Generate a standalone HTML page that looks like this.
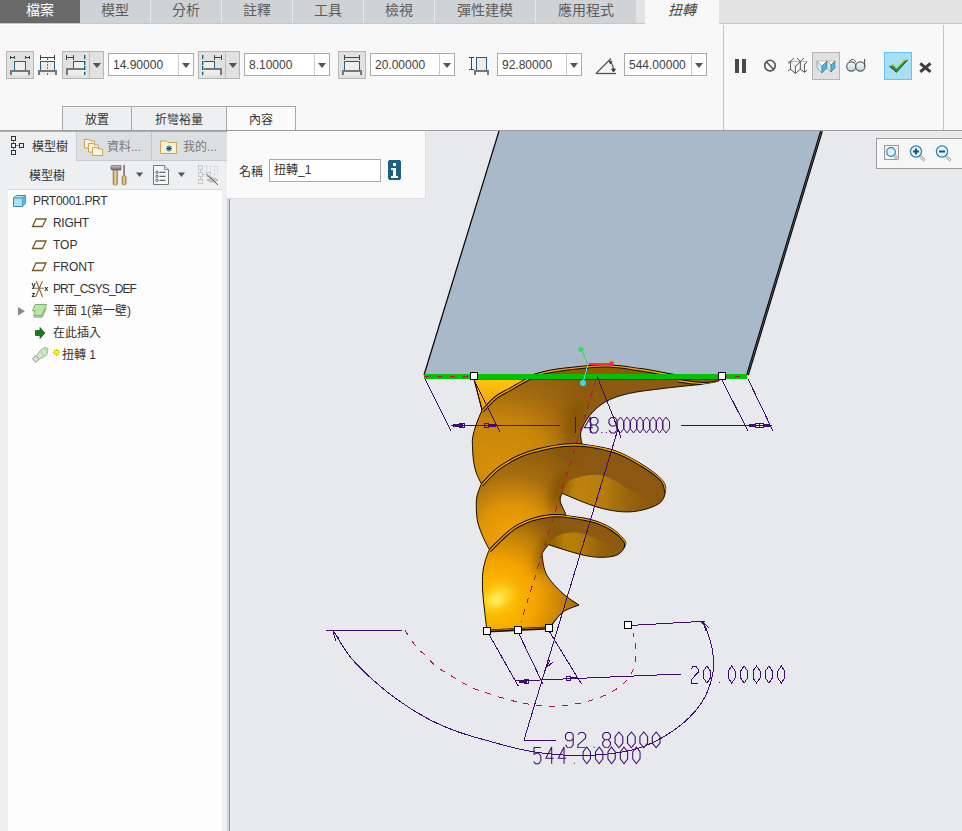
<!DOCTYPE html>
<html lang="zh-TW">
<head>
<meta charset="utf-8">
<style>
*{margin:0;padding:0;box-sizing:border-box}
html,body{width:962px;height:831px;overflow:hidden;background:#e8e9ec;font-family:"Liberation Sans",sans-serif;color:#333}
.a{position:absolute}
.tab{position:absolute;top:0;height:23px;background:#d0d3d6;color:#5c5c5c;font-size:14px;line-height:20px;text-align:center}
.sep{position:absolute;top:0;height:23px;width:1px;background:#e6e8ea}
.btn{position:absolute;background:#e1e1e1;border:1px solid #b5b5b5}
.inp{position:absolute;height:23px;background:#fff;border:1px solid #ababab;font-size:12px;line-height:22px;padding-left:4px;color:#404040}
.inp .dd{position:absolute;right:0;top:0;width:15px;height:21px;border-left:1px solid #ccc;background:#fff}
.tri{position:absolute;width:0;height:0;border-left:4px solid transparent;border-right:4px solid transparent;border-top:5px solid #555}
.stab{position:absolute;top:106px;height:24px;background:#eeeff1;border:1px solid #a8a8a8;border-bottom:none;font-size:12px;line-height:26px;text-align:center;color:#333}
.tree{font-size:12px;color:#333}
.row{position:absolute;left:0;height:22px;line-height:22px;white-space:nowrap}
</style>
</head>
<body>
<!-- TAB BAR -->
<div class="a" style="left:0;top:0;width:962px;height:24px;background:#e3e3e3"></div>
<div class="a" style="left:0;top:23px;width:962px;height:1px;background:#c6c9cc"></div>
<div class="tab" style="left:0;width:80px;background:#696969;color:#fff">檔案</div>
<div class="tab" style="left:80px;width:70px">模型</div>
<div class="sep" style="left:150px"></div>
<div class="tab" style="left:151px;width:70px">分析</div>
<div class="sep" style="left:221px"></div>
<div class="tab" style="left:222px;width:70px">註釋</div>
<div class="sep" style="left:292px"></div>
<div class="tab" style="left:293px;width:70px">工具</div>
<div class="sep" style="left:363px"></div>
<div class="tab" style="left:364px;width:70px">檢視</div>
<div class="sep" style="left:434px"></div>
<div class="tab" style="left:435px;width:100px">彈性建模</div>
<div class="sep" style="left:535px"></div>
<div class="tab" style="left:536px;width:100px">應用程式</div>
<div class="tab" style="left:645px;width:74px;height:24px;background:#f8f8f8;font-style:italic;color:#444">扭轉</div>

<!-- RIBBON -->
<div class="a" style="left:0;top:24px;width:962px;height:106px;background:#f8f8f8"></div>
<div class="a" style="left:0;top:24px;width:80px;height:1px;background:#fff"></div>
<div class="a" style="left:723px;top:25px;width:1px;height:105px;background:#c4c4c4"></div>
<div class="a" style="left:943px;top:25px;width:1px;height:105px;background:#c4c4c4"></div>
<div class="a" style="left:0;top:130px;width:962px;height:1px;background:#9c9c9c"></div>

<!-- ribbon controls -->
<div class="btn" style="left:6px;top:51px;width:28px;height:28px"></div>
<div class="btn" style="left:62px;top:51px;width:42px;height:28px"></div>
<div class="a" style="left:89px;top:52px;width:1px;height:26px;background:#bdbdbd"></div>
<div class="tri" style="left:93px;top:63px"></div>
<div class="inp" style="left:108px;top:53px;width:86px">14.90000<div class="dd"><div class="tri" style="left:3px;top:9px"></div></div></div>
<div class="btn" style="left:198px;top:51px;width:42px;height:28px"></div>
<div class="a" style="left:225px;top:52px;width:1px;height:26px;background:#bdbdbd"></div>
<div class="tri" style="left:229px;top:63px"></div>
<div class="inp" style="left:244px;top:53px;width:86px">8.10000<div class="dd"><div class="tri" style="left:3px;top:9px"></div></div></div>
<div class="btn" style="left:338px;top:51px;width:28px;height:28px"></div>
<div class="inp" style="left:370px;top:53px;width:85px">20.00000<div class="dd"><div class="tri" style="left:3px;top:9px"></div></div></div>
<div class="inp" style="left:497px;top:53px;width:85px">92.80000<div class="dd"><div class="tri" style="left:3px;top:9px"></div></div></div>
<div class="inp" style="left:624px;top:53px;width:83px">544.00000<div class="dd"><div class="tri" style="left:3px;top:9px"></div></div></div>

<div class="btn" style="left:812px;top:52px;width:28px;height:28px"></div>
<div class="a" style="left:884px;top:52px;width:28px;height:28px;background:#a7def8;border:1px solid #68c2ee"></div>

<!-- sub tabs -->
<div class="stab" style="left:62px;width:70px">放置</div>
<div class="stab" style="left:131px;width:96px">折彎裕量</div>
<div class="stab" style="left:226px;width:70px;background:#fafafa">內容</div>

<!-- LEFT PANEL -->
<div class="a" style="left:0;top:131px;width:227px;height:700px;background:#eeeff1"></div>
<div class="a" style="left:76px;top:131px;width:151px;height:30px;background:#dcdfe1;border-left:1px solid #c9cccf;border-bottom:1px solid #c9cccf"></div>
<div class="a" style="left:151px;top:131px;width:1px;height:29px;background:#c2c5c8"></div>
<div class="a tree" style="left:32px;top:139px;line-height:16px">模型樹</div>
<div class="a tree" style="left:107px;top:139px;line-height:16px;color:#777">資料...</div>
<div class="a tree" style="left:183px;top:139px;line-height:16px;color:#777">我的...</div>
<div class="a tree" style="left:29px;top:168px;line-height:16px">模型樹</div>
<div class="a" style="left:8px;top:189px;width:214px;height:642px;background:#fdfdfd;border-top:1px solid #dcdcdc"></div>
<div class="a tree" style="left:8px;top:190px;width:214px;height:200px">
  <div class="row" style="top:0;left:25px;letter-spacing:-0.3px">PRT0001.PRT</div>
  <div class="row" style="top:22px;left:45px;letter-spacing:-0.3px">RIGHT</div>
  <div class="row" style="top:44px;left:45px">TOP</div>
  <div class="row" style="top:66px;left:45px">FRONT</div>
  <div class="row" style="top:88px;left:45px;letter-spacing:-0.9px">PRT_CSYS_DEF</div>
  <div class="row" style="top:110px;left:45px">平面 1(第一壁)</div>
  <div class="row" style="top:132px;left:45px">在此插入</div>
  <div class="row" style="top:154px;left:54px">扭轉 1</div>
</div>

<div class="a" style="left:0;top:131px;width:227px;height:1px;background:#b0b0b0"></div>
<!-- splitter -->
<div class="a" style="left:227px;top:131px;width:3px;height:700px;background:#d3d3d3"></div>
<div class="a" style="left:229px;top:131px;width:1px;height:700px;background:#9a9a9a"></div>

<!-- VIEW3D -->
<svg class="a" style="left:230px;top:131px" width="732" height="700" viewBox="230 131 732 700">
<defs>
 <linearGradient id="gBase" gradientUnits="userSpaceOnUse" x1="470" y1="620" x2="640" y2="420">
  <stop offset="0" stop-color="#f6a800"/><stop offset="0.35" stop-color="#d88e08"/><stop offset="0.7" stop-color="#9c6610"/><stop offset="1" stop-color="#8a5a12"/>
 </linearGradient>
 <radialGradient id="gR1" gradientUnits="userSpaceOnUse" cx="500" cy="470" r="120"><stop offset="0" stop-color="#d89208"/><stop offset="0.4" stop-color="#c8860a"/><stop offset="0.7" stop-color="#a06810"/><stop offset="1" stop-color="#8c5a10"/></radialGradient>
 <radialGradient id="gR2" gradientUnits="userSpaceOnUse" cx="512" cy="540" r="100"><stop offset="0" stop-color="#f6a600"/><stop offset="0.35" stop-color="#de9408"/><stop offset="0.65" stop-color="#a86e0e"/><stop offset="1" stop-color="#8a5810"/></radialGradient>
 <radialGradient id="gR3" gradientUnits="userSpaceOnUse" cx="497" cy="600" r="90"><stop offset="0" stop-color="#fff25a"/><stop offset="0.1" stop-color="#ffc000"/><stop offset="0.45" stop-color="#f2a200"/><stop offset="0.75" stop-color="#c08008"/><stop offset="1" stop-color="#8c5a10"/></radialGradient>
 <linearGradient id="gWedge" gradientUnits="userSpaceOnUse" x1="0" y1="379" x2="0" y2="410">
  <stop offset="0" stop-color="#ffc410"/><stop offset="1" stop-color="#f2a000"/>
 </linearGradient>
 <linearGradient id="gFl" gradientUnits="userSpaceOnUse" x1="560" y1="450" x2="660" y2="500">
  <stop offset="0" stop-color="#b87c0e"/><stop offset="0.45" stop-color="#9a6410"/><stop offset="1" stop-color="#885810"/>
 </linearGradient>
 <linearGradient id="gR3b" gradientUnits="userSpaceOnUse" x1="480" y1="0" x2="560" y2="0">
  <stop offset="0" stop-color="#e89a04"/><stop offset="0.6" stop-color="#f4a400"/><stop offset="0.85" stop-color="#b87810"/><stop offset="1" stop-color="#8a5a10"/>
 </linearGradient>
 <linearGradient id="gFl1" gradientUnits="userSpaceOnUse" x1="580" y1="420" x2="720" y2="380">
  <stop offset="0" stop-color="#8a5a12"/><stop offset="0.4" stop-color="#9c6510"/><stop offset="1" stop-color="#946010"/>
 </linearGradient>
 <linearGradient id="gFl3" gradientUnits="userSpaceOnUse" x1="545" y1="520" x2="625" y2="550">
  <stop offset="0" stop-color="#b67a0e"/><stop offset="0.5" stop-color="#9a6410"/><stop offset="1" stop-color="#8a5a12"/>
 </linearGradient>
 <filter id="fBlur" x="-50%" y="-50%" width="200%" height="200%"><feGaussianBlur stdDeviation="6"/></filter>
 <linearGradient id="gIn2" gradientUnits="userSpaceOnUse" x1="562" y1="0" x2="660" y2="0"><stop offset="0" stop-color="#c88a0c"/><stop offset="0.45" stop-color="#b47a0c"/><stop offset="1" stop-color="#8e5a02" stop-opacity="0"/></linearGradient>
 <linearGradient id="gIn3" gradientUnits="userSpaceOnUse" x1="547" y1="0" x2="620" y2="0"><stop offset="0" stop-color="#c88a0c"/><stop offset="0.5" stop-color="#b07808"/><stop offset="1" stop-color="#8e5a02" stop-opacity="0"/></linearGradient>
 <radialGradient id="gBlob"><stop offset="0" stop-color="#c08008" stop-opacity="0.8"/><stop offset="1" stop-color="#c08008" stop-opacity="0"/></radialGradient>
 <clipPath id="cSil"><path d="M474.0 379.0C515.0 379.0 679.0 379.0 720.0 379.0L720.0 379.0C719.5 379.4 720.3 380.6 717.0 381.5C713.7 382.4 704.5 383.8 700.0 384.5C695.5 385.2 696.2 384.8 690.0 385.5C683.8 386.2 673.2 387.2 663.0 388.5C652.8 389.8 638.1 391.3 628.6 393.5C619.1 395.7 612.2 398.0 605.7 401.7C599.2 405.4 593.8 410.5 589.7 415.5C585.6 420.5 582.3 426.8 581.0 431.5C579.7 436.2 581.8 441.9 582.0 444.0L582.0 444.0C587.3 445.1 604.2 447.0 614.0 450.3C623.8 453.6 633.1 459.0 641.0 463.8C648.9 468.6 657.2 474.5 661.3 479.0C665.4 483.5 666.0 486.6 665.5 490.8C665.0 495.0 663.8 500.7 658.0 504.2C652.2 507.7 640.8 511.2 631.0 511.8C621.2 512.4 610.5 510.7 599.0 507.6C587.5 504.5 568.2 495.7 562.0 493.3L562.0 493.3C561.7 494.6 559.7 497.6 560.2 500.9C560.8 504.2 564.4 511.0 565.3 513.0L565.3 515.5C569.5 516.1 582.9 517.4 590.5 519.4C598.1 521.4 605.2 524.4 610.8 527.8C616.4 531.2 621.8 536.5 624.2 539.6C626.6 542.7 626.1 543.8 625.0 546.3C623.9 548.8 621.3 553.0 617.5 554.8C613.7 556.6 608.2 557.3 602.3 557.3C596.4 557.3 591.0 556.9 582.0 554.8C573.0 552.7 554.0 546.4 548.4 544.7L548.4 544.7C547.6 545.8 544.4 549.4 543.4 551.4C542.4 553.4 541.7 553.0 542.3 557.0C542.9 561.0 543.5 569.1 546.9 575.2C550.3 581.3 557.5 588.5 562.9 593.5C568.2 598.5 576.3 603.1 579.0 605.0L579.0 605.0C576.3 606.2 567.6 608.6 563.0 612.0C558.4 615.4 553.8 622.8 551.5 625.5C549.2 628.2 549.4 627.6 549.0 628.0L549.0 628.0C543.8 628.3 528.3 629.5 518.0 630.0C507.7 630.5 492.2 630.8 487.0 631.0L487.0 631.0C486.6 627.5 485.2 616.8 484.5 610.0C483.8 603.2 482.9 596.2 482.6 590.0C482.3 583.8 482.3 577.7 482.8 572.6C483.3 567.5 484.5 563.5 485.6 559.6C486.7 555.8 488.7 551.2 489.3 549.5L489.3 549.5C488.2 547.3 484.7 541.1 482.8 536.5C480.9 531.9 478.8 526.8 477.7 522.0C476.6 517.2 476.4 511.9 476.3 507.6C476.2 503.3 476.2 500.0 477.0 496.0C477.8 492.0 480.6 485.8 481.3 483.8L481.3 483.8C480.4 481.8 477.3 476.0 476.0 472.0C474.7 468.0 474.0 464.0 473.4 460.0C472.8 456.0 472.7 451.7 472.6 448.0C472.5 444.3 472.0 441.8 472.6 438.0C473.2 434.2 474.4 429.7 476.0 425.0C477.6 420.3 481.0 412.5 482.0 410.0L482.0 410.0C480.7 404.8 475.3 384.2 474.0 379.0Z"/></clipPath>
</defs>
<polygon points="499,131 822,131 748,375 424,375" fill="#aab9ca"/>
<path d="M499 131L424 375" stroke="#000" stroke-width="1.2" fill="none"/>
<path d="M821.5 131L747.5 375" stroke="#000" stroke-width="2.8" fill="none"/>
<path d="M821.5 131L747.5 375" stroke="#9aa4b0" stroke-width="0.5" fill="none"/>
<path d="M474.0 379.0C515.0 379.0 679.0 379.0 720.0 379.0L720.0 379.0C719.5 379.4 720.3 380.6 717.0 381.5C713.7 382.4 704.5 383.8 700.0 384.5C695.5 385.2 696.2 384.8 690.0 385.5C683.8 386.2 673.2 387.2 663.0 388.5C652.8 389.8 638.1 391.3 628.6 393.5C619.1 395.7 612.2 398.0 605.7 401.7C599.2 405.4 593.8 410.5 589.7 415.5C585.6 420.5 582.3 426.8 581.0 431.5C579.7 436.2 581.8 441.9 582.0 444.0L582.0 444.0C587.3 445.1 604.2 447.0 614.0 450.3C623.8 453.6 633.1 459.0 641.0 463.8C648.9 468.6 657.2 474.5 661.3 479.0C665.4 483.5 666.0 486.6 665.5 490.8C665.0 495.0 663.8 500.7 658.0 504.2C652.2 507.7 640.8 511.2 631.0 511.8C621.2 512.4 610.5 510.7 599.0 507.6C587.5 504.5 568.2 495.7 562.0 493.3L562.0 493.3C561.7 494.6 559.7 497.6 560.2 500.9C560.8 504.2 564.4 511.0 565.3 513.0L565.3 515.5C569.5 516.1 582.9 517.4 590.5 519.4C598.1 521.4 605.2 524.4 610.8 527.8C616.4 531.2 621.8 536.5 624.2 539.6C626.6 542.7 626.1 543.8 625.0 546.3C623.9 548.8 621.3 553.0 617.5 554.8C613.7 556.6 608.2 557.3 602.3 557.3C596.4 557.3 591.0 556.9 582.0 554.8C573.0 552.7 554.0 546.4 548.4 544.7L548.4 544.7C547.6 545.8 544.4 549.4 543.4 551.4C542.4 553.4 541.7 553.0 542.3 557.0C542.9 561.0 543.5 569.1 546.9 575.2C550.3 581.3 557.5 588.5 562.9 593.5C568.2 598.5 576.3 603.1 579.0 605.0L579.0 605.0C576.3 606.2 567.6 608.6 563.0 612.0C558.4 615.4 553.8 622.8 551.5 625.5C549.2 628.2 549.4 627.6 549.0 628.0L549.0 628.0C543.8 628.3 528.3 629.5 518.0 630.0C507.7 630.5 492.2 630.8 487.0 631.0L487.0 631.0C486.6 627.5 485.2 616.8 484.5 610.0C483.8 603.2 482.9 596.2 482.6 590.0C482.3 583.8 482.3 577.7 482.8 572.6C483.3 567.5 484.5 563.5 485.6 559.6C486.7 555.8 488.7 551.2 489.3 549.5L489.3 549.5C488.2 547.3 484.7 541.1 482.8 536.5C480.9 531.9 478.8 526.8 477.7 522.0C476.6 517.2 476.4 511.9 476.3 507.6C476.2 503.3 476.2 500.0 477.0 496.0C477.8 492.0 480.6 485.8 481.3 483.8L481.3 483.8C480.4 481.8 477.3 476.0 476.0 472.0C474.7 468.0 474.0 464.0 473.4 460.0C472.8 456.0 472.7 451.7 472.6 448.0C472.5 444.3 472.0 441.8 472.6 438.0C473.2 434.2 474.4 429.7 476.0 425.0C477.6 420.3 481.0 412.5 482.0 410.0L482.0 410.0C480.7 404.8 475.3 384.2 474.0 379.0Z" fill="#8e5a02"/>
<g clip-path="url(#cSil)">
<path d="M465 375L730 375L730 495C664.8 488.8 665.4 483.5 661.3 479.0C657.2 474.5 648.9 468.6 641.0 463.8C633.1 459.0 625.2 453.7 614.0 450.3C602.8 446.9 587.9 443.4 573.7 443.6C559.5 443.8 540.9 447.8 528.6 451.5C516.3 455.2 507.9 460.6 500.0 466.0C492.1 471.4 484.4 480.8 481.3 483.8L465 490Z" fill="url(#gR1)"/>
<path d="M481.3 483.8C484.4 480.8 492.1 471.4 500.0 466.0C507.9 460.6 516.3 455.2 528.6 451.5C540.9 447.8 559.5 443.8 573.7 443.6C587.9 443.4 602.8 446.9 614.0 450.3C625.2 453.7 633.1 459.0 641.0 463.8C648.9 468.6 657.2 474.5 661.3 479.0C665.4 483.5 664.8 488.8 665.5 490.8L680 550C624.9 545.2 626.6 542.7 624.2 539.6C621.8 536.5 616.4 531.2 610.8 527.8C605.2 524.4 600.4 521.6 590.5 519.4C580.6 517.2 563.8 513.7 551.5 514.6C539.2 515.5 527.4 519.2 517.0 525.0C506.6 530.8 493.9 545.4 489.3 549.5L465 552L465 484Z" fill="url(#gR2)"/>
<path d="M489.3 549.5C493.9 545.4 506.6 530.8 517.0 525.0C527.4 519.2 539.2 515.5 551.5 514.6C563.8 513.7 580.6 517.2 590.5 519.4C600.4 521.6 605.2 524.4 610.8 527.8C616.4 531.2 621.8 536.5 624.2 539.6C626.6 542.7 624.9 545.2 625.0 546.3L640 640L465 640L465 552Z" fill="url(#gR3)"/>
<path d="M562.3 493.6C563.2 491.7 564.9 484.8 568.0 482.0C571.1 479.2 575.7 478.0 581.0 476.8C586.3 475.6 594.2 474.4 599.8 475.0C605.4 475.6 609.8 478.0 614.8 480.5C619.8 483.0 624.2 486.6 629.8 490.0C635.4 493.4 643.5 498.2 648.5 501.0C653.5 503.8 658.1 505.8 660.0 506.7L658 504.2C653.5 505.5 640.8 511.2 631.0 511.8C621.2 512.4 610.5 510.7 599.0 507.6C587.5 504.5 568.2 495.7 562.0 493.3Z" fill="url(#gIn2)"/>
<path d="M547.2 544C549.1 542.6 554.4 537.3 558.6 535.4C562.8 533.5 568.5 533.0 572.3 532.6C576.1 532.2 578.5 532.5 581.5 533.2C584.5 533.9 586.7 535.0 590.6 536.6C594.5 538.2 600.1 540.4 605.0 543.0C609.9 545.6 617.5 550.5 620.0 552.0L617.5 554.8C615.0 555.2 608.2 557.3 602.3 557.3C596.4 557.3 591.0 556.9 582.0 554.8C573.0 552.7 554.0 546.4 548.4 544.7Z" fill="url(#gIn3)"/>
<g filter="url(#fBlur)">
<ellipse cx="548" cy="552" rx="9" ry="22" transform="rotate(20 548 552)" fill="#7a4c00" opacity="0.75"/>
<ellipse cx="560" cy="490" rx="9" ry="22" transform="rotate(15 560 490)" fill="#7a4c00" opacity="0.7"/>
<ellipse cx="574" cy="425" rx="10" ry="26" transform="rotate(10 574 425)" fill="#7a4c00" opacity="0.6"/>
<ellipse cx="497" cy="598" rx="16" ry="7" transform="rotate(-25 497 598)" fill="#fff060" opacity="0.9"/>
</g>
</g>
<path d="M474 379L482 410C484.3 407.7 491.2 399.7 496.0 396.0C500.8 392.3 505.5 390.6 510.5 387.7C515.5 384.8 522.4 380.6 526.0 378.7C529.6 376.8 531.0 376.4 532.0 376.0L532 379Z" fill="url(#gWedge)"/>
<path d="M530.0 377.0C530.9 376.4 530.5 375.1 535.5 373.7C540.5 372.3 548.3 370.1 560.0 368.6C571.7 367.1 592.4 364.7 605.7 364.7C619.0 364.7 629.3 367.1 640.0 368.6C650.7 370.1 661.5 372.4 669.8 373.8C678.1 375.2 686.6 376.5 690.0 377.0L690 379L530 379Z" fill="#8e5a02"/>
<path d="M474.0 379.0C515.0 379.0 679.0 379.0 720.0 379.0L720.0 379.0C719.5 379.4 720.3 380.6 717.0 381.5C713.7 382.4 704.5 383.8 700.0 384.5C695.5 385.2 696.2 384.8 690.0 385.5C683.8 386.2 673.2 387.2 663.0 388.5C652.8 389.8 638.1 391.3 628.6 393.5C619.1 395.7 612.2 398.0 605.7 401.7C599.2 405.4 593.8 410.5 589.7 415.5C585.6 420.5 582.3 426.8 581.0 431.5C579.7 436.2 581.8 441.9 582.0 444.0L582.0 444.0C587.3 445.1 604.2 447.0 614.0 450.3C623.8 453.6 633.1 459.0 641.0 463.8C648.9 468.6 657.2 474.5 661.3 479.0C665.4 483.5 666.0 486.6 665.5 490.8C665.0 495.0 663.8 500.7 658.0 504.2C652.2 507.7 640.8 511.2 631.0 511.8C621.2 512.4 610.5 510.7 599.0 507.6C587.5 504.5 568.2 495.7 562.0 493.3L562.0 493.3C561.7 494.6 559.7 497.6 560.2 500.9C560.8 504.2 564.4 511.0 565.3 513.0L565.3 515.5C569.5 516.1 582.9 517.4 590.5 519.4C598.1 521.4 605.2 524.4 610.8 527.8C616.4 531.2 621.8 536.5 624.2 539.6C626.6 542.7 626.1 543.8 625.0 546.3C623.9 548.8 621.3 553.0 617.5 554.8C613.7 556.6 608.2 557.3 602.3 557.3C596.4 557.3 591.0 556.9 582.0 554.8C573.0 552.7 554.0 546.4 548.4 544.7L548.4 544.7C547.6 545.8 544.4 549.4 543.4 551.4C542.4 553.4 541.7 553.0 542.3 557.0C542.9 561.0 543.5 569.1 546.9 575.2C550.3 581.3 557.5 588.5 562.9 593.5C568.2 598.5 576.3 603.1 579.0 605.0L579.0 605.0C576.3 606.2 567.6 608.6 563.0 612.0C558.4 615.4 553.8 622.8 551.5 625.5C549.2 628.2 549.4 627.6 549.0 628.0L549.0 628.0C543.8 628.3 528.3 629.5 518.0 630.0C507.7 630.5 492.2 630.8 487.0 631.0L487.0 631.0C486.6 627.5 485.2 616.8 484.5 610.0C483.8 603.2 482.9 596.2 482.6 590.0C482.3 583.8 482.3 577.7 482.8 572.6C483.3 567.5 484.5 563.5 485.6 559.6C486.7 555.8 488.7 551.2 489.3 549.5L489.3 549.5C488.2 547.3 484.7 541.1 482.8 536.5C480.9 531.9 478.8 526.8 477.7 522.0C476.6 517.2 476.4 511.9 476.3 507.6C476.2 503.3 476.2 500.0 477.0 496.0C477.8 492.0 480.6 485.8 481.3 483.8L481.3 483.8C480.4 481.8 477.3 476.0 476.0 472.0C474.7 468.0 474.0 464.0 473.4 460.0C472.8 456.0 472.7 451.7 472.6 448.0C472.5 444.3 472.0 441.8 472.6 438.0C473.2 434.2 474.4 429.7 476.0 425.0C477.6 420.3 481.0 412.5 482.0 410.0L482.0 410.0C480.7 404.8 475.3 384.2 474.0 379.0Z" fill="none" stroke="#1a1208" stroke-width="1"/>
<g><path d="M482.0 410.0C484.3 407.7 491.2 399.7 496.0 396.0C500.8 392.3 505.5 390.6 510.5 387.7C515.5 384.8 521.8 381.0 526.0 378.7C530.2 376.4 529.8 375.4 535.5 373.7C541.2 372.0 548.3 370.1 560.0 368.6C571.7 367.1 592.4 364.7 605.7 364.7C619.0 364.7 629.3 367.1 640.0 368.6C650.7 370.1 661.5 372.4 669.8 373.8C678.1 375.2 686.6 376.5 690.0 377.0" fill="none" stroke="#0e0a04" stroke-width="3.4" transform="translate(0.4 1.2)"/>
<path d="M482.0 410.0C484.3 407.7 491.2 399.7 496.0 396.0C500.8 392.3 505.5 390.6 510.5 387.7C515.5 384.8 521.8 381.0 526.0 378.7C530.2 376.4 529.8 375.4 535.5 373.7C541.2 372.0 548.3 370.1 560.0 368.6C571.7 367.1 592.4 364.7 605.7 364.7C619.0 364.7 629.3 367.1 640.0 368.6C650.7 370.1 661.5 372.4 669.8 373.8C678.1 375.2 686.6 376.5 690.0 377.0" fill="none" stroke="#f4a400" stroke-width="1.4" transform="translate(0.4 1.2)"/></g>
<g clip-path="url(#cSil)"><path d="M481.3 483.8C484.4 480.8 492.1 471.4 500.0 466.0C507.9 460.6 516.3 455.2 528.6 451.5C540.9 447.8 559.5 443.8 573.7 443.6C587.9 443.4 602.8 446.9 614.0 450.3C625.2 453.7 633.1 459.0 641.0 463.8C648.9 468.6 657.2 474.5 661.3 479.0C665.4 483.5 664.8 488.8 665.5 490.8" fill="none" stroke="#0e0a04" stroke-width="3.4" transform="translate(0.4 1.2)"/>
<path d="M481.3 483.8C484.4 480.8 492.1 471.4 500.0 466.0C507.9 460.6 516.3 455.2 528.6 451.5C540.9 447.8 559.5 443.8 573.7 443.6C587.9 443.4 602.8 446.9 614.0 450.3C625.2 453.7 633.1 459.0 641.0 463.8C648.9 468.6 657.2 474.5 661.3 479.0C665.4 483.5 664.8 488.8 665.5 490.8" fill="none" stroke="#f4a400" stroke-width="1.4" transform="translate(0.4 1.2)"/></g>
<g clip-path="url(#cSil)"><path d="M489.3 549.5C493.9 545.4 506.6 530.8 517.0 525.0C527.4 519.2 539.2 515.5 551.5 514.6C563.8 513.7 580.6 517.2 590.5 519.4C600.4 521.6 605.2 524.4 610.8 527.8C616.4 531.2 621.8 536.5 624.2 539.6C626.6 542.7 624.9 545.2 625.0 546.3" fill="none" stroke="#0e0a04" stroke-width="3.4" transform="translate(0.4 1.2)"/>
<path d="M489.3 549.5C493.9 545.4 506.6 530.8 517.0 525.0C527.4 519.2 539.2 515.5 551.5 514.6C563.8 513.7 580.6 517.2 590.5 519.4C600.4 521.6 605.2 524.4 610.8 527.8C616.4 531.2 621.8 536.5 624.2 539.6C626.6 542.7 624.9 545.2 625.0 546.3" fill="none" stroke="#f4a400" stroke-width="1.4" transform="translate(0.4 1.2)"/></g>
<g clip-path="url(#cSil)"><path d="M549.0 628.0C550.2 626.7 553.2 622.8 556.0 620.0C558.8 617.2 562.2 613.5 566.0 611.0C569.8 608.5 576.8 606.0 579.0 605.0" fill="none" stroke="#0e0a04" stroke-width="3.4" transform="translate(0.4 1.2)"/>
<path d="M549.0 628.0C550.2 626.7 553.2 622.8 556.0 620.0C558.8 617.2 562.2 613.5 566.0 611.0C569.8 608.5 576.8 606.0 579.0 605.0" fill="none" stroke="#f4a400" stroke-width="1.4" transform="translate(0.4 1.2)"/></g>
<g clip-path="url(#cSil)"><path d="M678.0 379.5C680.3 379.8 687.5 381.0 692.0 381.5C696.5 382.0 701.0 382.6 705.0 382.5C709.0 382.4 714.2 381.2 716.0 381.0" fill="none" stroke="#0e0a04" stroke-width="3.4" transform="translate(0.4 1.2)"/>
<path d="M678.0 379.5C680.3 379.8 687.5 381.0 692.0 381.5C696.5 382.0 701.0 382.6 705.0 382.5C709.0 382.4 714.2 381.2 716.0 381.0" fill="none" stroke="#f4a400" stroke-width="1.4" transform="translate(0.4 1.2)"/></g>
<path d="M474 379L482 410" stroke="#1a1208" stroke-width="1"/>
<path d="M487 631L549 628" stroke="#1a1208" stroke-width="3"/>
<path d="M487 630.5L549 627.5" stroke="#9a6408" stroke-width="1"/>
</svg>
<!-- /VIEW3D -->
<!-- OVERLAY -->
<svg class="a" style="left:230px;top:131px" width="732" height="700" viewBox="230 131 732 700" shape-rendering="crispEdges">
<rect x="424" y="374" width="323" height="5" fill="#00c200"/>
<path d="M424 376.5H470M722 376.5H747" stroke="#b0144e" stroke-width="1.2" stroke-dasharray="5 8"/>
<path d="M581 349L588 364" stroke="#30e050" stroke-width="1"/>
<circle cx="581" cy="349.5" r="2.5" fill="#30e050" shape-rendering="auto"/>
<path d="M588 364L583 383" stroke="#30e0e8" stroke-width="1"/>
<circle cx="583" cy="383" r="3" fill="#30e0e8" shape-rendering="auto"/>
<path d="M589 364H611" stroke="#ff3020" stroke-width="1.6"/>
<circle cx="611.5" cy="363.5" r="2.3" fill="#ff3020" shape-rendering="auto"/>
<path d="M596 380L521 622" stroke="#b0144e" stroke-width="1" stroke-dasharray="6 6" fill="none"/>
<path d="M405.0 630.5C406.7 632.9 411.4 640.6 415.0 645.0C418.6 649.4 422.9 653.0 426.5 656.6C430.1 660.2 432.6 663.5 436.5 666.6C440.4 669.7 445.6 672.3 450.0 675.0C454.4 677.7 458.0 680.4 463.0 683.0C468.0 685.6 470.7 687.5 480.0 690.7C489.3 693.9 506.8 699.7 519.0 702.3C531.2 704.9 541.3 706.4 553.0 706.2C564.7 706.0 578.2 704.0 589.0 701.0C599.8 698.0 610.7 693.2 618.0 688.0C625.3 682.8 630.0 676.5 633.0 670.0C636.0 663.5 636.0 655.1 636.0 649.0C636.0 642.9 633.5 636.0 633.0 633.4" stroke="#b0144e" stroke-width="1" stroke-dasharray="6 7" fill="none"/>
<path d="M425.0 379.0L451.0 431.0M474.0 380.0L500.0 432.0M451.0 425.5L560.0 425.5M681.0 425.5L772.0 425.5M722.0 380.0L748.0 431.0M748.0 379.0L773.0 431.0M597.0 376.0L618.0 429.0M618.0 429.0L524.0 740.0M524.0 740.3L556.0 740.3M487.0 631.0L518.3 686.0M518.0 632.0L543.0 684.0M549.0 631.0L581.5 684.0M516.4 681.0L681.0 674.0M628.0 625.6L704.8 621.2M326.0 630.5L402.0 630.5" stroke="#3e0c6e" stroke-width="1" fill="none"/>
<path d="M333.3 630.8C336.1 635.1 343.4 648.4 350.0 656.6C356.6 664.8 364.7 672.5 373.0 680.0C381.3 687.5 391.1 695.2 400.0 701.5C408.9 707.8 417.7 713.2 426.5 718.0C435.3 722.8 444.1 726.6 453.0 730.0C461.9 733.4 466.8 735.0 480.0 738.6C493.2 742.2 514.7 748.8 532.0 751.6C549.3 754.4 566.7 755.9 584.0 755.5C601.3 755.1 620.8 753.3 636.0 749.0C651.2 744.7 664.2 737.1 675.0 729.5C685.8 721.9 694.7 712.7 701.0 703.6C707.3 694.5 710.7 683.7 712.6 675.0C714.5 666.3 713.7 659.4 712.6 651.6C711.5 643.8 707.9 633.0 706.0 628.0C704.1 623.0 701.8 622.8 701.0 621.7" stroke="#3e0c6e" stroke-width="1" fill="none"/>
<g stroke="#3e0c6e" fill="none" stroke-width="1">
<path d="M453 425.5H463M488 425.5H496" stroke-width="2.6"/>
<rect x="459.5" y="423.5" width="5" height="4"/><rect x="484.5" y="423.5" width="4" height="4"/>
<path d="M749 425.5H755M764 425.5H770" stroke-width="2.6"/><rect x="755.5" y="423.5" width="4" height="4"/><rect x="759.5" y="423.5" width="4" height="4"/>
<path d="M519 681.2H527M570 678H578" stroke-width="2.6"/>
<rect x="524.5" y="679" width="4" height="4"/><rect x="566.5" y="676" width="4" height="4"/>
<path d="M333 632L336 641M333 632L339 638M703 622L706 631M703 622L709 628M546 668L550 660M546 668L553 662M618 429L615 438M618 429L621 438"/>
</g>
<rect x="470.5" y="372.5" width="7" height="7" fill="#fff" stroke="#000" stroke-width="1"/>
<rect x="718.5" y="372.5" width="7" height="7" fill="#fff" stroke="#000" stroke-width="1"/>
<rect x="483.5" y="627.5" width="7" height="7" fill="#fff" stroke="#000" stroke-width="1"/>
<rect x="514.5" y="626.5" width="7" height="7" fill="#fff" stroke="#000" stroke-width="1"/>
<rect x="545.5" y="624.5" width="7" height="7" fill="#fff" stroke="#000" stroke-width="1"/>
<rect x="624.5" y="621.5" width="7" height="7" fill="#fff" stroke="#000" stroke-width="1"/>
<g fill="none" stroke="#3e0c6e" stroke-width="1"><path transform="translate(691.0 666.0) scale(1.00 1.00)" d="M0 3L2 0.5H5L7 3V6.5L0 14V17H7"/><path transform="translate(703.4 666.0) scale(1.00 1.00)" d="M3.5 0L7 5V12L3.5 17L0 12V5Z"/><path transform="translate(715.8 666.0) scale(1.00 1.00)" d="M3 16.5h1"/><path transform="translate(728.2 666.0) scale(1.00 1.00)" d="M3.5 0L7 5V12L3.5 17L0 12V5Z"/><path transform="translate(740.6 666.0) scale(1.00 1.00)" d="M3.5 0L7 5V12L3.5 17L0 12V5Z"/><path transform="translate(753.0 666.0) scale(1.00 1.00)" d="M3.5 0L7 5V12L3.5 17L0 12V5Z"/><path transform="translate(765.4 666.0) scale(1.00 1.00)" d="M3.5 0L7 5V12L3.5 17L0 12V5Z"/><path transform="translate(777.8 666.0) scale(1.00 1.00)" d="M3.5 0L7 5V12L3.5 17L0 12V5Z"/></g>
<g fill="none" stroke="#3e0c6e" stroke-width="1"><path transform="translate(565.5 732.0) scale(1.10 0.92)" d="M7 7L5 9.5H2L0 7V3L2 0.5H5L7 3V14L5 17H2L0 14"/><path transform="translate(577.9 732.0) scale(1.10 0.92)" d="M0 3L2 0.5H5L7 3V6.5L0 14V17H7"/><path transform="translate(590.3 732.0) scale(1.10 0.92)" d="M3 16.5h1"/><path transform="translate(602.7 732.0) scale(1.10 0.92)" d="M2 8.5L0 6V3L2 0.5H5L7 3V6L5 8.5ZM2 8.5L0 11V14L2 17H5L7 14V11L5 8.5"/><path transform="translate(615.1 732.0) scale(1.10 0.92)" d="M3.5 0L7 5V12L3.5 17L0 12V5Z"/><path transform="translate(627.5 732.0) scale(1.10 0.92)" d="M3.5 0L7 5V12L3.5 17L0 12V5Z"/><path transform="translate(639.9 732.0) scale(1.10 0.92)" d="M3.5 0L7 5V12L3.5 17L0 12V5Z"/><path transform="translate(652.3 732.0) scale(1.10 0.92)" d="M3.5 0L7 5V12L3.5 17L0 12V5Z"/></g>
<g fill="none" stroke="#3e0c6e" stroke-width="1"><path transform="translate(533.5 747.0) scale(1.05 0.98)" d="M7 0.5H0.5V7.5L2.5 6.5H5L7 9V14L5 17H2L0 15"/><path transform="translate(545.9 747.0) scale(1.05 0.98)" d="M5.5 17V0L0 11.5H7.5"/><path transform="translate(558.3 747.0) scale(1.05 0.98)" d="M5.5 17V0L0 11.5H7.5"/><path transform="translate(570.7 747.0) scale(1.05 0.98)" d="M3 16.5h1"/><path transform="translate(583.1 747.0) scale(1.05 0.98)" d="M3.5 0L7 5V12L3.5 17L0 12V5Z"/><path transform="translate(595.5 747.0) scale(1.05 0.98)" d="M3.5 0L7 5V12L3.5 17L0 12V5Z"/><path transform="translate(607.9 747.0) scale(1.05 0.98)" d="M3.5 0L7 5V12L3.5 17L0 12V5Z"/><path transform="translate(620.3 747.0) scale(1.05 0.98)" d="M3.5 0L7 5V12L3.5 17L0 12V5Z"/><path transform="translate(632.7 747.0) scale(1.05 0.98)" d="M3.5 0L7 5V12L3.5 17L0 12V5Z"/></g>
<path d="M575.5 417V433" stroke="#3e0c6e" stroke-width="1.2"/>
<g fill="none" stroke="#3e0c6e" stroke-width="1"><path transform="translate(584.3 417.0) scale(1.14 0.94)" d="M5.5 17V0L0 11.5H7.5"/><path transform="translate(590.0 417.0) scale(1.14 0.94)" d="M2 8.5L0 6V3L2 0.5H5L7 3V6L5 8.5ZM2 8.5L0 11V14L2 17H5L7 14V11L5 8.5"/><path transform="translate(598.0 417.0) scale(1.14 0.94)" d="M3 16.5h1"/><path transform="translate(602.5 417.0) scale(1.14 0.94)" d="M3 16.5h1"/><path transform="translate(609.0 417.0) scale(1.14 0.94)" d="M7 7L5 9.5H2L0 7V3L2 0.5H5L7 3V14L5 17H2L0 14"/><path transform="translate(617.0 417.0) scale(1.00 0.94)" d="M3.5 0L7 5V12L3.5 17L0 12V5Z"/><path transform="translate(623.5 417.0) scale(1.00 0.94)" d="M3.5 0L7 5V12L3.5 17L0 12V5Z"/><path transform="translate(630.0 417.0) scale(1.00 0.94)" d="M3.5 0L7 5V12L3.5 17L0 12V5Z"/><path transform="translate(636.5 417.0) scale(1.00 0.94)" d="M3.5 0L7 5V12L3.5 17L0 12V5Z"/><path transform="translate(643.0 417.0) scale(1.00 0.94)" d="M3.5 0L7 5V12L3.5 17L0 12V5Z"/><path transform="translate(649.5 417.0) scale(1.00 0.94)" d="M3.5 0L7 5V12L3.5 17L0 12V5Z"/><path transform="translate(656.0 417.0) scale(1.00 0.94)" d="M3.5 0L7 5V12L3.5 17L0 12V5Z"/><path transform="translate(662.5 417.0) scale(1.00 0.94)" d="M3.5 0L7 5V12L3.5 17L0 12V5Z"/></g>
</svg>
<!-- /OVERLAY -->
<!-- NAME PANEL -->
<div class="a" style="left:227px;top:131px;width:199px;height:68px;background:#fafafa;border-right:1px solid #dedede;border-bottom:1px solid #dedede"></div>
<div class="a tree" style="left:239px;top:164px;line-height:16px">名稱</div>
<div class="a" style="left:269px;top:159px;width:112px;height:23px;background:#fff;border:1px solid #aaa;font-size:12px;line-height:21px;padding-left:4px;color:#333">扭轉_1</div>
<div class="a" style="left:388px;top:160px;width:13px;height:20px;background:#1d5f80;border-radius:3px"></div>

<!-- VIEW TOOLBAR -->
<div class="a" style="left:876px;top:138px;width:90px;height:31px;background:#f6f6f6;border:1px solid #9d9d9d"></div>


<!-- RIBBON ICONS -->
<svg class="a" style="left:0;top:0" width="962" height="370" viewBox="0 0 962 370" shape-rendering="crispEdges">
 <defs>
  <linearGradient id="glass" x1="0" y1="0" x2="0" y2="1"><stop offset="0" stop-color="#fff"/><stop offset="1" stop-color="#b9d3e0"/></linearGradient>
 </defs>
 <!-- icon1 -->
 <g>
  <rect x="15" y="62" width="11" height="8" fill="#efefef"/>
  <path d="M14.5 70V61.5H25.5V70" fill="none" stroke="#13638e" stroke-width="1"/>
  <rect x="10" y="70" width="20" height="2" fill="#777"/>
  <rect x="10" y="72" width="2" height="3" fill="#777"/><rect x="28" y="72" width="2" height="3" fill="#777"/>
  <rect x="12" y="72" width="16" height="3" fill="#ededed"/>
  <path d="M10.5 56v3M14.5 56v3M10 57.5h5M25.5 56v3M29.5 56v3M25 57.5h5" stroke="#444" stroke-width="1"/>
 </g>
 <!-- icon2 -->
 <g>
  <rect x="41" y="62" width="13" height="8" fill="#ececec"/>
  <path d="M40.5 70V61.5H54.5V70" fill="none" stroke="#13638e" stroke-width="1"/>
  <rect x="38" y="70" width="19" height="2" fill="#777"/>
  <rect x="38" y="72" width="2" height="3" fill="#777"/><rect x="55" y="72" width="2" height="3" fill="#777"/>
  <rect x="40" y="72" width="15" height="3" fill="#ededed"/>
  <path d="M40.5 55v5M54.5 55v5M40 57.5h15" stroke="#444" stroke-width="1"/>
  <path d="M47.5 58v17" stroke="#a0700f" stroke-width="1" stroke-dasharray="2 1"/>
 </g>
 <!-- icon3 -->
 <g>
  <rect x="74" y="62" width="10" height="6" fill="#efefef"/>
  <rect x="68" y="70" width="16" height="5" fill="#ededed"/>
  <path d="M73.5 68V61.5H84" fill="none" stroke="#13638e" stroke-width="1"/>
  <rect x="66" y="68" width="18" height="2" fill="#777"/>
  <rect x="66" y="70" width="2" height="5" fill="#777"/>
  <path d="M66.5 55v5M73.5 55v5M67 57.5h6" stroke="#444" stroke-width="1"/>
  <path d="M84.5 55v20" stroke="#0f5f86" stroke-width="1" stroke-dasharray="4 1.5"/>
  <path d="M85.5 55v20" stroke="#5cc8f0" stroke-width="1" stroke-dasharray="4 1.5"/>
 </g>
 <polygon points="93,63 100,63 96.5,67" fill="#555" shape-rendering="auto"/>
 <!-- icon4 -->
 <g>
  <rect x="204" y="62" width="10" height="6" fill="#efefef"/>
  <rect x="204" y="70" width="16" height="5" fill="#ededed"/>
  <path d="M204 61.5H214.5V68" fill="none" stroke="#13638e" stroke-width="1"/>
  <rect x="204" y="68" width="18" height="2" fill="#777"/>
  <rect x="220" y="70" width="2" height="5" fill="#777"/>
  <path d="M214.5 55v5M221.5 55v5M215 57.5h6" stroke="#444" stroke-width="1"/>
  <path d="M202.5 55v20" stroke="#0f5f86" stroke-width="1" stroke-dasharray="4 1.5"/>
  <path d="M203.5 55v20" stroke="#5cc8f0" stroke-width="1" stroke-dasharray="4 1.5"/>
 </g>
 <polygon points="229,63 236,63 232.5,67" fill="#555" shape-rendering="auto"/>
 <!-- icon5 -->
 <g>
  <rect x="345" y="62" width="15" height="8" fill="#efefef"/>
  <path d="M344.5 70V61.5H359.5V70" fill="none" stroke="#13638e" stroke-width="1"/>
  <rect x="342" y="70" width="20" height="2" fill="#777"/>
  <rect x="342" y="72" width="2" height="3" fill="#777"/><rect x="360" y="72" width="2" height="3" fill="#777"/>
  <rect x="344" y="72" width="16" height="3" fill="#ededed"/>
  <path d="M344.5 55v5M359.5 55v5M345 57.5h14" stroke="#444" stroke-width="1"/>
 </g>
 <!-- icon6 -->
 <g>
  <rect x="477" y="58" width="10" height="12" fill="#ededed"/>
  <path d="M476.5 70V57.5H486.5V70" fill="none" stroke="#13638e" stroke-width="1"/>
  <rect x="474" y="70" width="15" height="2" fill="#777"/>
  <rect x="474" y="72" width="2" height="3" fill="#777"/><rect x="487" y="72" width="2" height="3" fill="#777"/>
  <path d="M469 57.5h5M469 69.5h5M471.5 58v11" stroke="#444" stroke-width="1"/>
 </g>
 <!-- icon7 angle -->
 <g shape-rendering="auto" fill="none" stroke="#555">
  <path d="M596 73.5L611 58.5" stroke-width="1.3"/>
  <path d="M596 73.5H616" stroke-width="1.3"/>
  <path d="M610.5 62.5Q613.5 65 613.5 71" stroke-width="1.2"/>
  <path d="M609 61l3 0.5-1.5 2.5z" fill="#444" stroke="#444" stroke-width="1"/>
  <path d="M611.5 69h4l-2 3z" fill="#444" stroke="#444" stroke-width="1"/>
 </g>
 <!-- pause -->
 <rect x="735" y="59" width="4" height="14" fill="#4a4a4a"/>
 <rect x="742" y="59" width="4" height="14" fill="#4a4a4a"/>
 <!-- ban -->
 <g shape-rendering="auto">
  <circle cx="770" cy="65.6" r="5.3" fill="none" stroke="#555" stroke-width="1.6"/>
  <path d="M766.5 62L773.5 69.2" stroke="#555" stroke-width="1.6"/>
 </g>
 <!-- wire cube -->
 <g shape-rendering="auto" fill="none" stroke-linecap="round">
  <path d="M788 61.5H807" stroke="#b8b8b8" stroke-width="1"/>
  <path d="M790.5 62l5 4.5 5-4.5M790.5 69.5l5 4-5" stroke="#c8c8c8" stroke-width="0.8"/>
  <path d="M790.5 61.5V69.3M795.4 66.4V73.3M800.4 61.5V69.3M804.5 64.3V72.2" stroke="#666" stroke-width="1.1"/>
  <path d="M788.3 70.8L790.5 69.3L795.4 73.3L800.4 69.3L804.5 72.2L806.8 70.5" stroke="#555" stroke-width="1"/>
  <path d="M788.3 63.3L793.6 58.3M795.4 66.4L803.6 58.3M797.3 58.3L800.4 61.5M804.5 64.3L806.8 62.3" stroke="#555" stroke-width="1"/>
 </g>
 <!-- folded boxes (pressed button) -->
 <g shape-rendering="auto">
  <polygon points="817,61 827,61 822,66" fill="#fff" stroke="#888" stroke-width="0.5"/>
  <polygon points="817,61 822,66 822,73 817,68.5" fill="#c4eef9" stroke="#777" stroke-width="0.5"/>
  <polygon points="822,66 827,61 827,68 822,73" fill="#4bb6e6" stroke="#555" stroke-width="0.5"/>
  <polygon points="827,61 835,61 831,65" fill="#fff" stroke="#888" stroke-width="0.5"/>
  <polygon points="827,61 831,65 831,72 827,68" fill="#c4eef9" stroke="#777" stroke-width="0.5"/>
  <polygon points="831,65 835,61 835,68 831,72" fill="#4bb6e6" stroke="#555" stroke-width="0.5"/>
 </g>
 <!-- glasses -->
 <g shape-rendering="auto">
  <circle cx="851.3" cy="66.5" r="4.6" fill="url(#glass)" stroke="#555" stroke-width="1.1"/>
  <circle cx="860.3" cy="66.5" r="4.6" fill="url(#glass)" stroke="#555" stroke-width="1.1"/>
  <path d="M849 61.5Q851 59 853.5 59.5L856 62" fill="none" stroke="#555" stroke-width="1"/>
  <path d="M864.6 66.5V59" stroke="#555" stroke-width="1.1"/>
 </g>
 <!-- check -->
 <g shape-rendering="auto">
  <path d="M889 66l4.3-1.2 3.2 3.2 8.8-8.6 2.3 0.6-11.1 12.3z" fill="#2e8a5a" stroke="#1c4a2e" stroke-width="0.9"/>
  <path d="M889 66l4.3-1.2 3.2 3.2 8.8-8.6 2.3 0.6" fill="none" stroke="#d8ec1a" stroke-width="1.1"/>
 </g>
 <!-- X -->
 <path d="M920.3 63.3l10.2 8.6M930.5 63.3l-10.2 8.6" stroke="#3c3c3c" stroke-width="3" shape-rendering="auto"/>

 <!-- model tree tab icon -->
 <g fill="none" stroke="#333" stroke-width="1">
  <rect x="11.5" y="136.5" width="4" height="4"/>
  <rect x="11.5" y="143.5" width="4" height="4"/>
  <rect x="11.5" y="150.5" width="4" height="4"/>
  <rect x="19.5" y="143.5" width="4" height="4"/>
  <path d="M13.5 141v2M13.5 148v2M16 145.5h3" stroke="#888"/>
 </g>
 <!-- folders -->
 <g shape-rendering="auto">
  <path d="M84.5 139.5h5l1 1.5h4v7h-10z" fill="#fdf3da" stroke="#c9a55a" stroke-width="1"/>
  <path d="M88.5 143.5h5l1 1.5h4v7h-10z" fill="#fdf3da" stroke="#c9a55a" stroke-width="1"/>
  <path d="M92.5 147.5h5l1 1.5h4v6.5h-10z" fill="#fdf3da" stroke="#c9a55a" stroke-width="1"/>
  <path d="M160.5 141h6l1.5 1.5h8.5v11h-16z" fill="#fdf0d0" stroke="#c9a55a" stroke-width="1"/>
  <path d="M169 145.5v6M166 148.5h6M166.8 146.3l4.4 4.4M171.2 146.3l-4.4 4.4" stroke="#1a5f85" stroke-width="1.1"/>
 </g>
 <!-- tree header icons -->
 <g shape-rendering="auto">
  <defs><linearGradient id="tan" x1="0" x2="1"><stop offset="0" stop-color="#a88850"/><stop offset="0.5" stop-color="#ecd7a0"/><stop offset="1" stop-color="#a88850"/></linearGradient>
  <linearGradient id="hgr" x1="0" y1="0" x2="0" y2="1"><stop offset="0" stop-color="#c8c8c8"/><stop offset="1" stop-color="#666"/></linearGradient></defs>
  <rect x="113" y="169.5" width="4.6" height="15.5" rx="1.5" fill="url(#tan)" stroke="#8a6a30" stroke-width="0.5"/>
  <path d="M111.5 165.5H121v4.5h-9.5q-1.5-2.25 0-4.5z" fill="url(#hgr)" stroke="#555" stroke-width="0.6"/>
  <rect x="123.3" y="165" width="1.6" height="11.5" fill="#777"/>
  <rect x="122" y="176" width="4.2" height="9" rx="1.3" fill="url(#tan)" stroke="#8a6a30" stroke-width="0.5"/>
  <polygon points="136,172.5 143,172.5 139.5,177" fill="#555"/>
  <path d="M153.5 165.5h11l4 4v15h-15z" fill="#f4f8fa" stroke="#777" stroke-width="1"/>
  <path d="M164.5 165.5v4h4" fill="#cfe0ea" stroke="#777" stroke-width="0.8"/>
  <g fill="none" stroke="#555" stroke-width="0.9"><circle cx="157" cy="172.3" r="1.2"/><circle cx="157" cy="176.3" r="1.2"/><circle cx="157" cy="180.3" r="1.2"/></g>
  <path d="M159.5 172.3h6M159.5 176.3h6M159.5 180.3h6" stroke="#444" stroke-width="1"/>
  <polygon points="178,172.5 185,172.5 181.5,177" fill="#555"/>
  <g fill="none" stroke="#c8c8c8" stroke-width="1"><rect x="198.5" y="165.5" width="4" height="4"/><rect x="198.5" y="172.5" width="4" height="4"/><rect x="198.5" y="179.5" width="4" height="4"/><path d="M200.5 170v2M200.5 177v2M203 174.5h4"/><path d="M206.5 166v8M210.5 166v14M214.5 166v10M206 166h2M210 166h2M214 166h3M217.5 166v7" stroke="#d8d8d8"/><rect x="206.5" y="172.5" width="4" height="4"/></g>
  <path d="M207 180q5-5 11 0q-5 4.5-11 0z" fill="#c4c4c4" stroke="#aaa" stroke-width="0.6"/>
  <path d="M207 174.5l11 10.5" stroke="#444" stroke-width="0.9"/>
 </g>

 <!-- tree item icons -->
 <g shape-rendering="auto">
  <polygon points="13.5,198 16.5,195.5 25.5,195.5 25.5,203.5 22.5,206.5 13.5,206.5" fill="#a9e0f5" stroke="#2b7fae" stroke-width="0.9"/>
  <path d="M13.5 198h9v8.5M22.5 198l3-2.5" fill="none" stroke="#2b7fae" stroke-width="0.9"/>
  <polygon points="22.5,198 25.5,195.5 25.5,203.5 22.5,206.5" fill="#5fb7df"/>
  <g fill="none" stroke="#7a5a2a" stroke-width="1.3">
   <polygon points="36,219 46,219 42.5,226.5 32.5,226.5"/>
   <polygon points="36,241 46,241 42.5,248.5 32.5,248.5"/>
   <polygon points="36,263 46,263 42.5,270.5 32.5,270.5"/>
  </g>
  <path d="M35.5 297l7-16M36.2 281l6.4 16M32 288.3h12" stroke="#8a6a3a" stroke-width="1.1" fill="none"/>
  <text x="31.5" y="286.5" font-family="Liberation Sans" font-size="7.5" font-weight="bold" fill="#222">y</text>
  <text x="31.5" y="297" font-family="Liberation Sans" font-size="7.5" font-weight="bold" fill="#222">z</text>
  <text x="44.3" y="291" font-family="Liberation Sans" font-size="7.5" font-weight="bold" fill="#222">x</text>
  <polygon points="18,307 25,311.3 18,315.6" fill="#888"/>
  <polygon points="35,304.5 46.5,304.5 42,315.5 33.5,315.5 35,311 32.5,311" fill="#b8e6a6" stroke="#6aa05a" stroke-width="0.8"/>
  <path d="M33.5 317h8.5l4.3-9" stroke="#9ab08f" stroke-width="1.4" fill="none"/>
  <polygon points="35.5,330.5 40,330.5 40,327.5 45,333 40,338.5 40,335.5 35.5,335.5" fill="#1e7a1e" stroke="#0d4a0d" stroke-width="0.7"/>
  <path d="M33 358.5l4.5-4 3-4.5 4.5-2.5 3 1-1 6-4 3-3 1-4.5 3.5z" fill="#cdeac4" stroke="#7fa87a" stroke-width="0.7"/>
  <path d="M32.5 358.5l3 4 3.5-3-3-4z" fill="#e0e0e0" stroke="#888" stroke-width="0.8"/>
  <path d="M40.5 350l3 6M44.5 347.5l2.5 5.5" stroke="#8fb88a" stroke-width="0.6" fill="none"/>
  <g stroke="#c9c400" stroke-width="1.1"><path d="M56.4 348.8v7.1M52.8 352.3h7.2M54 350l4.8 4.8M58.8 350l-4.8 4.8"/></g>
  <circle cx="56.4" cy="352.3" r="1.5" fill="#ffff00"/>
 </g>

 <!-- info icon -->
 <rect x="388" y="160" width="13" height="20" rx="3" fill="#1b5f82"/>
 <rect x="393" y="163" width="3" height="3" fill="#fff"/>
 <path d="M391 168h5v8h2v2h-7v-2h2v-6h-2z" fill="#fff"/>

 <!-- view zoom icons -->
 <g shape-rendering="auto">
  <rect x="884.5" y="145.5" width="14" height="14" fill="#f2f2f2" stroke="#999" stroke-width="1"/>
  <path d="M894 155l4.5 4.5" stroke="#999" stroke-width="2.6"/>
  <path d="M894 155l4.5 4.5" stroke="#e6e6e6" stroke-width="1.2"/>
  <circle cx="891" cy="152" r="4.3" fill="#dff1fa" stroke="#2a86b3" stroke-width="1.2"/>
  <path d="M920 156l4.5 4.5" stroke="#999" stroke-width="2.6"/>
  <path d="M920 156l4.5 4.5" stroke="#e6e6e6" stroke-width="1.2"/>
  <circle cx="916" cy="151.5" r="5.6" fill="#e6f4fa" stroke="#2a86b3" stroke-width="1.3"/>
  <path d="M913 151.5h6M916 148.5v6" stroke="#12557c" stroke-width="2"/>
  <path d="M946 156l4.5 4.5" stroke="#999" stroke-width="2.6"/>
  <path d="M946 156l4.5 4.5" stroke="#e6e6e6" stroke-width="1.2"/>
  <circle cx="942" cy="151.5" r="5.6" fill="#e6f4fa" stroke="#2a86b3" stroke-width="1.3"/>
  <path d="M939 151.5h6" stroke="#12557c" stroke-width="2"/>
 </g>
</svg>

</body>
</html>
